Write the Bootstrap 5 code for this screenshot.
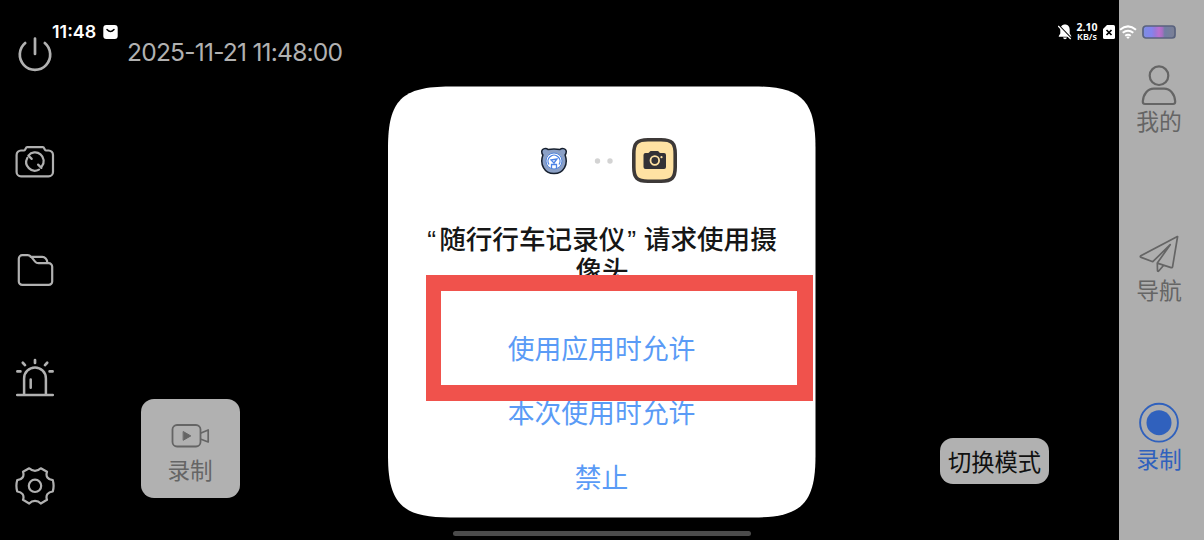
<!DOCTYPE html>
<html lang="zh-CN">
<head>
<meta charset="utf-8">
<meta name="viewport" content="width=device-width, initial-scale=1">
<title>随行行车记录仪</title>
<link href="https://cdn.jsdelivr.net/npm/bootstrap@5.3.0/dist/css/bootstrap.min.css" rel="stylesheet">
<style>
  body { background:#000; font-family:"Noto Sans CJK SC",sans-serif; height:540px; overflow:hidden; }
  .screen { height:540px; }
  .rail { width:70px; }
  .rail-item { height:108px; }
  .line-icon { fill:none; stroke:#b1b1b1; stroke-width:2.2; stroke-linecap:round; stroke-linejoin:round; display:block; }
  .stage { padding:0 70px 42px 57px; }
  .clock { font-family:Inter,sans-serif; font-size:24.6px; line-height:30px; color:#b1b1b1; margin-top:37px; letter-spacing:-.8px; font-weight:400; white-space:nowrap; }
  .rec-tile { width:99px; height:99px; border-radius:13px; background:#b1b1b1; color:#656565; padding-top:24px; margin-left:14px; }
  .tile-label { font-size:22.6px; line-height:28px; margin-top:6.500px; margin-left:-1px; }
  .mode-btn { width:109px; height:46px; border-radius:13px; background:#b1b1b1; color:#101010; font-size:23.3px; line-height:46px; margin-bottom:14px; }
  .side { width:85px; height:540px; background:#aeaeae; color:#656565; padding-top:63px; }
  .side-item { height:169px; padding-right:5px; }
  .side-item:last-child { height:auto; }
  .side-item .line-icon { stroke:#656565; }
  .side-label { font-size:22.8px; line-height:28px; margin-top:1px; }
  .side-on { color:#3061bd; }
  .status { top:22px; left:52px; right:28px; height:20px; color:#fff; font-family:Inter,sans-serif; }
  .status-time { font-size:17.9px; font-weight:600; line-height:20px; width:51px; white-space:nowrap; }
  .speed { font-family:"Noto Sans",sans-serif; font-size:10.5px; line-height:10px; font-weight:700; width:20px; margin:0 6px 0 5px; white-space:nowrap; }
  .speed div { margin:0 -3px; }
  .speed .speed-unit { font-size:9px; font-weight:600; }
  .dialog-wrap { left:388px; top:86px; width:428px; height:432px; padding-top:51px; }
  .dialog-shape { left:0; top:0; z-index:-1; }
  .grant-icons { height:47px; padding-left:152px; }
  .ask { font-size:26.6px; line-height:30px; font-weight:500; color:#161616; margin-top:39px; white-space:nowrap; }
  .quote-mark { display:inline-block; line-height:1; font-family:"Liberation Sans",sans-serif; font-weight:400; }
  .quote-open { width:12px; text-align:left; }
  .quote-close { width:18.500px; text-align:left; padding-left:2px; }
  .choice { font-size:26.8px; line-height:64.500px; height:64.500px; color:#5a9bf6; font-weight:400; }
  .choices { margin-top:32px; padding-right:1px; }
  .frame-mark { left:426px; top:275px; width:387px; height:126px; border:solid #f0524c; border-width:16px 16px 16px 15px; }
  .home-bar { left:453px; top:531px; width:298px; height:4.500px; background:#4b4b4b; border-radius:3px; }
</style>
</head>
<body>
<div class="screen d-flex position-relative">
  <nav class="rail d-flex flex-column flex-shrink-0">
    <div class="rail-item d-flex align-items-center justify-content-center">
      <svg class="line-icon" width="40" height="40" viewBox="0 0 40 40"><path stroke-width="2.700" d="M20 4.500V20M10.200 9A15.200 15.200 0 1 0 29.800 9"/></svg>
    </div>
    <div class="rail-item d-flex align-items-center justify-content-center">
      <svg class="line-icon" width="40" height="40" viewBox="0 0 40 40"><path d="M6 8.500h3.200c1.300 0 1.300-3.300 3-3.300h15.600c1.700 0 1.700 3.300 3 3.300H33.600a4.400 4.400 0 0 1 4.400 4.400v17a4.400 4.400 0 0 1-4.400 4.400H6A4.400 4.400 0 0 1 1.600 29.900V12.900A4.400 4.400 0 0 1 6 8.500Z"/><path d="M12.300 16A8.600 8.600 0 0 0 24 27.600M13.400 13.600A8.600 8.600 0 0 1 26.800 24.400M13.400 13.600l3.300 3.300M26.400 25.900l-3.300-3.300"/></svg>
    </div>
    <div class="rail-item d-flex align-items-center justify-content-center">
      <svg class="line-icon" width="40" height="40" viewBox="0 0 40 40"><path d="M7.300 5.200h5.400c1.800 0 3 .9 4.200 2.400l3.200 4c1 1.200 2 1.600 3.400 1.600h10.200a3.500 3.500 0 0 1 3.500 3.500v14.700a3.500 3.500 0 0 1-3.500 3.500H7.300a3.500 3.500 0 0 1-3.500-3.500V8.700a3.500 3.500 0 0 1 3.500-3.500ZM15.500 6.800h11.800c2.500 0 5 2.400 5 5.600"/></svg>
    </div>
    <div class="rail-item d-flex align-items-center justify-content-center">
      <svg class="line-icon" width="40" height="40" viewBox="0 0 40 40"><path stroke-width="2.500" d="M2.200 37h35.600M9.100 36.500V20.400a10.900 10.900 0 0 1 21.800 0v16.100M15.700 21.500v8.300"/><path stroke-width="2.700" d="M20 2v3M7.800 4.800l2.200 2.300M32.200 4.800L30 7.100M2.400 13.400h3M34.600 13.400h3"/></svg>
    </div>
    <div class="rail-item d-flex align-items-center justify-content-center">
      <svg class="line-icon" width="40" height="40" viewBox="0 0 40 40"><circle cx="20" cy="19.800" r="6.200"/><path d="M14.200 2.300 8 5.800C9.600 10.400 7.200 13.600 2.200 14.200Q.6 19.800 2.200 25.500C7.200 26 9.600 29.400 8 33.800L14.200 37.500C17.400 34 22.600 34 25.800 37.500L32 33.800C30.400 29.400 32.800 26 37.800 25.500Q39.400 19.800 37.800 14.200C32.800 13.600 30.400 10.400 32 5.800L25.800 2.300C22.600 5.600 17.400 5.600 14.200 2.300Z"/></svg>
    </div>
  </nav>

  <main class="stage flex-grow-1 d-flex flex-column justify-content-between">
    <div class="clock">2025-11-21 11:48:00</div>
    <div class="d-flex justify-content-between align-items-end">
      <div class="rec-tile d-flex flex-column align-items-center">
        <svg class="line-icon" width="40" height="26" viewBox="0 0 40 26" style="stroke:#656565"><rect x="1.500" y="2" width="28" height="21.500" rx="4.500" stroke-width="1.800"/><path stroke-width="1.700" d="m30 10 7.200-3v12l-7.200-2.700"/><path fill="#656565" stroke-width="1" d="m12.500 8.700 7.300 4.200-7.300 4.200Z"/></svg>
        <div class="tile-label">录制</div>
      </div>
      <div class="mode-btn text-center">切换模式</div>
    </div>
  </main>

  <aside class="side flex-shrink-0">
    <div class="side-item d-flex flex-column align-items-center">
      <svg class="line-icon" width="42" height="43" viewBox="0 0 42 43"><circle cx="21" cy="12.700" r="9.300"/><path d="M7 41h28c1.700 0 2.300-1 2.200-2.600-.5-7.200-5-12.800-11-12.800H15.800c-6 0-10.500 5.600-11 12.800C4.700 40 5.300 41 7 41Z"/></svg>
      <div class="side-label">我的</div>
    </div>
    <div class="side-item d-flex flex-column align-items-center">
      <svg class="line-icon" width="42" height="43" viewBox="0 0 42 43"><path stroke-width="1.700" d="M39.400 4.500 2.800 23.800c-.8.600-.6 1.200.4 1.600l11.600 4.300L32.200 12.700 19.300 31.100l13.800 4.500c.9.200 1.400-.2 1.500-1L39.600 4.500ZM19.300 31.100l.2 7.500c.1.800.7.900 1.200.4l5-5.700"/></svg>
      <div class="side-label">导航</div>
    </div>
    <div class="side-item side-on d-flex flex-column align-items-center">
      <svg width="42" height="43" viewBox="0 0 42 43"><circle cx="21" cy="21.700" r="18.900" fill="none" stroke="#3061bd" stroke-width="1.900"/><circle cx="21" cy="21.700" r="12.500" fill="#3061bd"/></svg>
      <div class="side-label">录制</div>
    </div>
  </aside>

  <div class="status position-absolute d-flex align-items-center justify-content-between">
    <div class="d-flex align-items-center">
      <span class="status-time">11:48</span>
      <svg width="15" height="14" viewBox="0 0 15 14"><rect x=".3" width="14.400" height="14" rx="3" fill="#fff"/><path d="M4 4.500q3.500 4 7 0" fill="none" stroke="#000" stroke-width="1.500" stroke-linecap="round"/></svg>
    </div>
    <div class="d-flex align-items-center">
      <svg width="14" height="16" viewBox="0 0 14 16"><path fill="#fff" d="M7 .5c-3 0-4.700 2.200-4.700 5v4L.8 12v.8h12.400V12l-1.500-2.500v-4c0-2.800-1.700-5-4.700-5ZM5 13.500h4q-.4 1.700-2 1.700t-2-1.700Z"/><path stroke="#000" stroke-width="1.500" d="m1 1.500 12.500 13"/><path stroke="#fff" stroke-width="1.300" d="m.2 2 12.500 13"/></svg>
      <div class="speed text-center"><div>2.10</div><div class="speed-unit">KB/s</div></div>
      <svg width="12" height="14" viewBox="0 0 12 14"><path fill="#fff" d="M4 0h6.500Q12 0 12 1.500v11q0 1.500-1.500 1.500h-9Q0 14 0 12.500V4Z"/><path stroke="#000" stroke-width="1.700" d="m3.500 5 5 5m0-5-5 5"/></svg>
      <svg style="margin:0 5px 0 4px" width="18" height="14" viewBox="0 0 18 14" fill="none" stroke="#fff" stroke-width="2"><path d="M1 4.700q8-6.600 16 0M3.700 7.800q5.300-4.200 10.600 0M6.200 10.700q2.800-2 5.600 0"/><path fill="#fff" stroke="none" d="M7.200 12q1.800-1 3.600 0L9 14Z"/></svg>
      <svg width="34" height="14" viewBox="0 0 34 14">
        <defs><linearGradient id="charge"><stop offset="0" stop-color="#7d8ee0"/><stop offset=".27" stop-color="#8583ed"/><stop offset=".38" stop-color="#9a78d8"/><stop offset=".5" stop-color="#bb70cf"/><stop offset=".6" stop-color="#a66fc3"/><stop offset=".68" stop-color="#717da4"/><stop offset="1" stop-color="#7b8094"/></linearGradient></defs>
        <rect x="1" y="1" width="32" height="12" rx="3" fill="url(#charge)" stroke="#59627e" stroke-width="1.700"/></svg>
    </div>
  </div>

  <section class="dialog-wrap position-absolute z-1">
    <svg class="dialog-shape position-absolute" width="428" height="432" viewBox="0 0 428 432"><path fill="#fff" d="M0 62C0 14 14 .4 62 .4H365.500C413.500 .4 427.500 14 427.500 62V369.500C427.500 417.500 413.500 431.500 365.500 431.500H62C14 431.500 0 417.500 0 369.500Z"/></svg>
    <div class="grant-icons d-flex align-items-center">
      <svg width="28" height="28" viewBox="0 0 28 28"><path fill="#8ba0c6" stroke="#17202f" stroke-width="1.500" d="M8 2.500C6.500 1 2 1 1.700 4.500c0 1.500.5 2.600 1.200 3.400C-.4 17 4 26.500 14 26.500S28.400 17 25.100 7.900c.7-.8 1.200-1.900 1.200-3.400C26 1 21.500 1 20 2.500q-6-1-12 0Z"/><circle cx="14" cy="14" r="8" fill="#fff" stroke="#5385db" stroke-width="1"/><path fill="none" stroke="#4b83e6" stroke-width="1.300" d="M9 17.500a6 6 0 1 1 10 0M11.500 21v-3.500h5V21M11 13l6-1-3 4Z"/></svg>
      <svg width="64" height="8" viewBox="0 0 64 8" fill="#d3d3d3"><circle cx="29.500" cy="4" r="2.700"/><circle cx="42" cy="4" r="2.700"/></svg>
      <svg width="45" height="45" viewBox="0 0 45 45" style="margin-left:-.5px"><path fill="#ffe2a3" stroke="#3d3938" stroke-width="3.600" d="M1.800 16C1.800 5 5 1.800 16 1.800H29C40 1.800 43.200 5 43.200 16V29C43.200 40 40 43.200 29 43.200H16C5 43.200 1.800 40 1.800 29Z"/><path fill="#343236" d="M13.500 15H16q1 0 1.500-1t1.500-1h6.500q1 0 1.500 1t1.500 1h3.500q2 0 2 2v12q0 2-2 2H13.500q-2 0-2-2V17q0-2 2-2Z"/><circle cx="22.800" cy="22.500" r="4.300" fill="none" stroke="#ffe2a3" stroke-width="1.800"/><circle cx="29.500" cy="19.200" r="1.100" fill="#ffe2a3"/></svg>
    </div>
    <div class="ask text-center"><span class="quote-mark quote-open">“</span>随行行车记录仪<span class="quote-mark quote-close">”</span>请求使用摄<br>像头</div>
    <div class="choices text-center">
      <div class="choice">使用应用时允许</div>
      <div class="choice">本次使用时允许</div>
      <div class="choice">禁止</div>
    </div>
  </section>

  <div class="frame-mark position-absolute z-2"></div>
  <div class="home-bar position-absolute"></div>
</div>
<script src="https://cdn.jsdelivr.net/npm/bootstrap@5.3.0/dist/js/bootstrap.bundle.min.js"></script>
</body>
</html>
